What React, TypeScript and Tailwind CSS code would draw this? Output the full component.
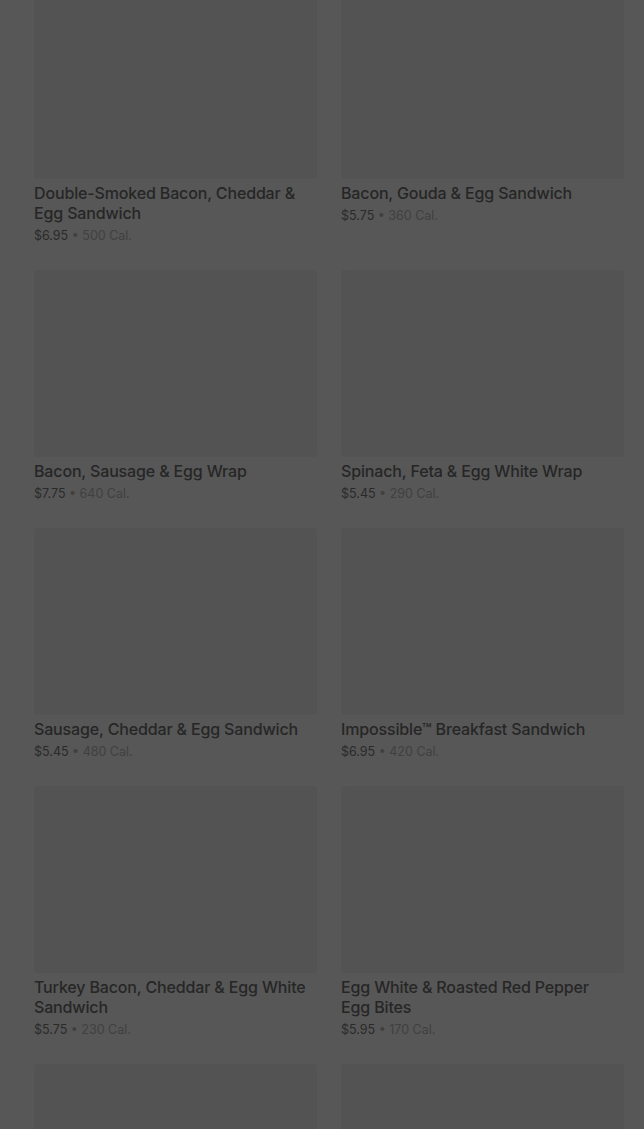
import React from "react";

const items = [
  { name: "Double-Smoked Bacon, Cheddar & Egg Sandwich", price: "$6.95", cal: "500 Cal." },
  { name: "Bacon, Gouda & Egg Sandwich", price: "$5.75", cal: "360 Cal." },
  { name: "Bacon, Sausage & Egg Wrap", price: "$7.75", cal: "640 Cal." },
  { name: "Spinach, Feta & Egg White Wrap", price: "$5.45", cal: "290 Cal." },
  { name: "Sausage, Cheddar & Egg Sandwich", price: "$5.45", cal: "480 Cal." },
  { name: "Impossible™ Breakfast Sandwich", price: "$6.95", cal: "420 Cal." },
  { name: "Turkey Bacon, Cheddar & Egg White Sandwich", price: "$5.75", cal: "230 Cal." },
  { name: "Egg White & Roasted Red Pepper Egg Bites", price: "$5.95", cal: "170 Cal." },
  { name: "", price: "", cal: "" },
  { name: "", price: "", cal: "" },
];

export default function App() {
  return (
    <div className="min-h-[1129px] h-[1129px] overflow-hidden bg-[#575757] font-['Inter',sans-serif]">
      <div className="-mt-2 grid grid-cols-2 gap-x-6 gap-y-6 pl-[34px] pr-[20px]">
        {items.map((item, i) => (
          <div key={i} className="flex flex-col">
            <div className="h-[187px] rounded-sm bg-[#535353]" />
            {item.name && (
              <>
                <h3 className="mt-1 pr-1 text-base font-medium leading-5 tracking-[-0.15px] text-[#262626]">
                  {item.name}
                </h3>
                <p className="mt-[3px] text-[12.5px] leading-5 text-[#2a2a2a]">
                  {item.price}
                  <span className="text-[#404040]"> • {item.cal}</span>
                </p>
              </>
            )}
          </div>
        ))}
      </div>
    </div>
  );
}
